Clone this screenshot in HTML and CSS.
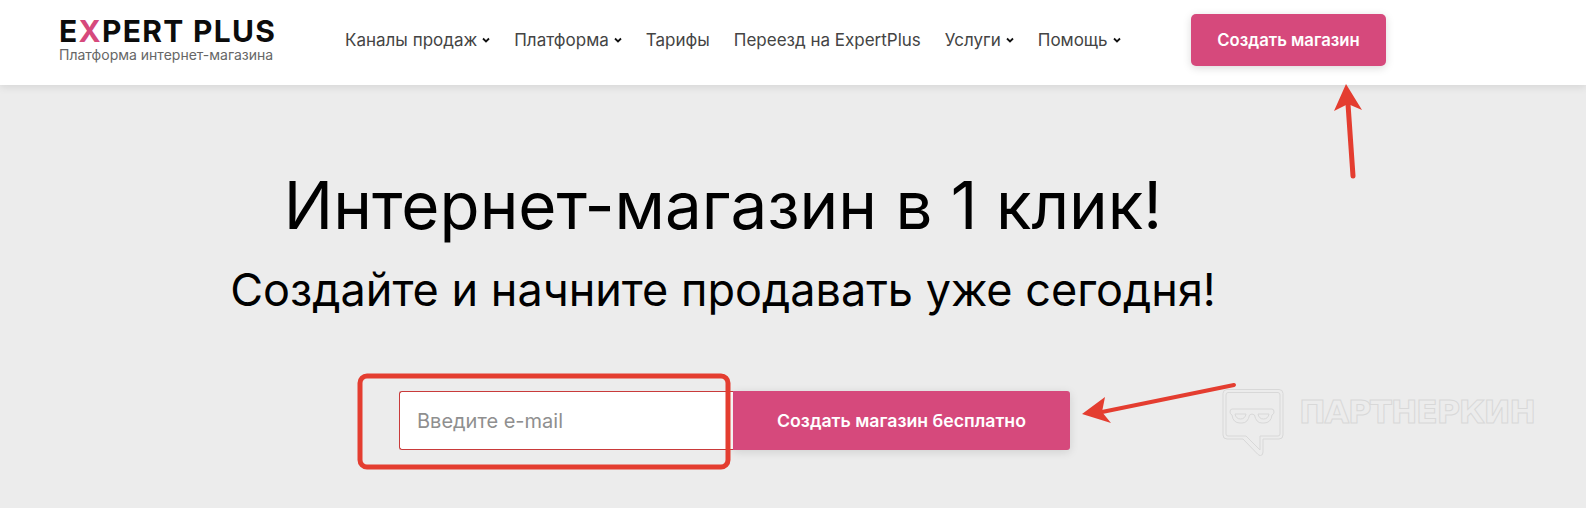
FILE: index.html
```html
<!DOCTYPE html>
<html lang="ru">
<head>
<meta charset="utf-8">
<title>Expert Plus</title>
<link rel="stylesheet" href="styles.css">
</head>
<body>
<header class="header">
  <a class="logo">
    <span class="logo-name">E<span class="logo-x">X</span>PERT PLUS</span>
    <span class="logo-tag">Платформа интернет-магазина</span>
  </a>
  <nav class="nav">
    <a class="nav-item">Каналы продаж<svg class="chev" viewBox="0 0 8 6"><path d="M1 1.500 4 4.500 7 1.500"/></svg></a>
    <a class="nav-item">Платформа<svg class="chev" viewBox="0 0 8 6"><path d="M1 1.500 4 4.500 7 1.500"/></svg></a>
    <a class="nav-item">Тарифы</a>
    <a class="nav-item">Переезд на ExpertPlus</a>
    <a class="nav-item">Услуги<svg class="chev" viewBox="0 0 8 6"><path d="M1 1.500 4 4.500 7 1.500"/></svg></a>
    <a class="nav-item">Помощь<svg class="chev" viewBox="0 0 8 6"><path d="M1 1.500 4 4.500 7 1.500"/></svg></a>
  </nav>
  <a class="cta">Создать магазин</a>
</header>
<main class="hero">
  <h1 class="title">Интернет-магазин в 1 клик!</h1>
  <h2 class="subtitle">Создайте и начните продавать уже сегодня!</h2>
  <form class="form">
    <input class="email" type="text" placeholder="Введите e-mail">
    <button class="submit" type="button">Создать магазин бесплатно</button>
  </form>
</main>
<div class="watermark">
  <svg class="wm-icon" viewBox="0 0 62 68">
    <path d="M5 .5H57Q61 .5 61 4.500V46Q61 50 57 50H41V63Q41 66.500 38.500 66.500Q37 66.500 35.500 65L21 50H5Q1 50 1 46V4.500Q1 .5 5 .5Z"/>
    <path d="M6 3.500H56Q58 3.500 58 6V45Q58 47 56 47H38V61L24 47H6Q4 47 4 45V6Q4 3.500 6 3.500Z"/>
    <path d="M10 20H50Q52 20 52 23Q52 25 50 26Q49 34 42 34H40Q34 34 32.500 26Q30 24 27.500 26Q26 34 20 34H18Q11 34 10 26Q8 25 8 23Q8 20 10 20Z"/>
    <path d="M13 25H24Q23 30 18.500 30Q14 30 13 25ZM36 25H47Q46 30 41.500 30Q37 30 36 25Z"/>
  </svg>
  <span class="wm-text">ПАРТНЕРКИН</span>
</div>
<svg class="marks" viewBox="0 0 1586 508">
  <rect class="mark-line" x="360" y="376" width="368" height="91" rx="7"/>
  <path class="mark-line" d="M1353 176 1348 104"/>
  <path class="mark-head" d="M1346 84 1362 110 1348 104 1334 111Z"/>
  <path class="mark-line thin" d="M1234 385 1102 412"/>
  <path class="mark-head" d="M1082 414 1105 397 1102 412 1111 423Z"/>
</svg>
</body>
</html>
```
FILE: styles.css
```css
* { box-sizing: border-box; }
html, body { height: 100%; }
body {
  margin: 0;
  background: #ececec;
  font-family: Inter, "Liberation Sans", sans-serif;
  color: #000;
  overflow: hidden;
  position: relative;
}
.header {
  height: 85px;
  background: #fff;
  box-shadow: 0 2px 8px rgba(0,0,0,.1);
  display: flex;
  align-items: center;
  padding: 0 0 0 59px;
}
.logo { display: flex; flex-direction: column; width: 286px; flex: none; margin-bottom: 6px; }
.logo-name {
  font: 700 30px/30px Inter, sans-serif;
  letter-spacing: 1.300px;
  color: #0c0c0c;
  white-space: nowrap;
}
.logo-x { color: #d6497c; }
.logo-tag { font-size: 14px; line-height: 16px; color: #666; margin-top: 1px; white-space: nowrap; }
.nav { display: flex; gap: 24px; width: 846px; flex: none; font-size: 17px; color: #444; margin-bottom: 6px; }
.nav-item { display: flex; align-items: center; white-space: nowrap; }
.chev { width: 8px; height: 6px; margin-left: 5px; fill: none; stroke: #111; stroke-width: 1.800; }
.cta {
  width: 195px;
  height: 52px;
  flex: none;
  margin-bottom: 5px;
  background: #d6497c;
  border-radius: 5px;
  box-shadow: 0 2px 8px rgba(0,0,0,.15);
  color: #fff;
  font-size: 16.700px;
  font-weight: 600;
  display: flex;
  align-items: center;
  justify-content: center;
}
.hero { padding-right: 140px; text-align: center; }
.title { margin: 77px 0 0; font-size: 65.500px; line-height: 88px; font-weight: 400; }
.subtitle { margin: 10px 0 0; font-size: 45px; line-height: 60px; font-weight: 400; }
.form { display: flex; margin: 71px 0 0 399px; height: 59px; }
.email {
  width: 334px;
  height: 59px;
  border: 1px solid #c93a3a;
  border-right: none;
  border-radius: 3px 0 0 3px;
  background: #fff;
  padding: 0 17px;
  font: 20px Inter, sans-serif;
  outline: none;
}
.email::placeholder { color: #8f8f8f; opacity: 1; }
.submit {
  width: 337px;
  border: 0;
  background: #d6497c;
  border-radius: 0 3px 3px 0;
  box-shadow: 0 2px 10px rgba(0,0,0,.12);
  color: #fff;
  font: 600 17.700px Inter, sans-serif;
}
.watermark {
  position: absolute;
  left: 1222px;
  top: 389px;
  display: flex;
  align-items: flex-start;
  gap: 15px;
}
.wm-icon { width: 62px; height: 68px; fill: none; stroke: #d8d8d8; stroke-width: 1; }
.wm-text {
  margin-top: 5px;
  font: 700 32px/36px "DejaVu Sans", sans-serif;
  letter-spacing: -1.300px;
  color: transparent;
  -webkit-text-stroke: 1px #d8d8d8;
  white-space: nowrap;
}
.marks { position: absolute; left: 0; top: 0; width: 1586px; height: 508px; pointer-events: none; }
.mark-line { fill: none; stroke: #e43d30; stroke-width: 5; stroke-linecap: round; }
.mark-line.thin { stroke-width: 4; }
.mark-head { fill: #e43d30; }
```
